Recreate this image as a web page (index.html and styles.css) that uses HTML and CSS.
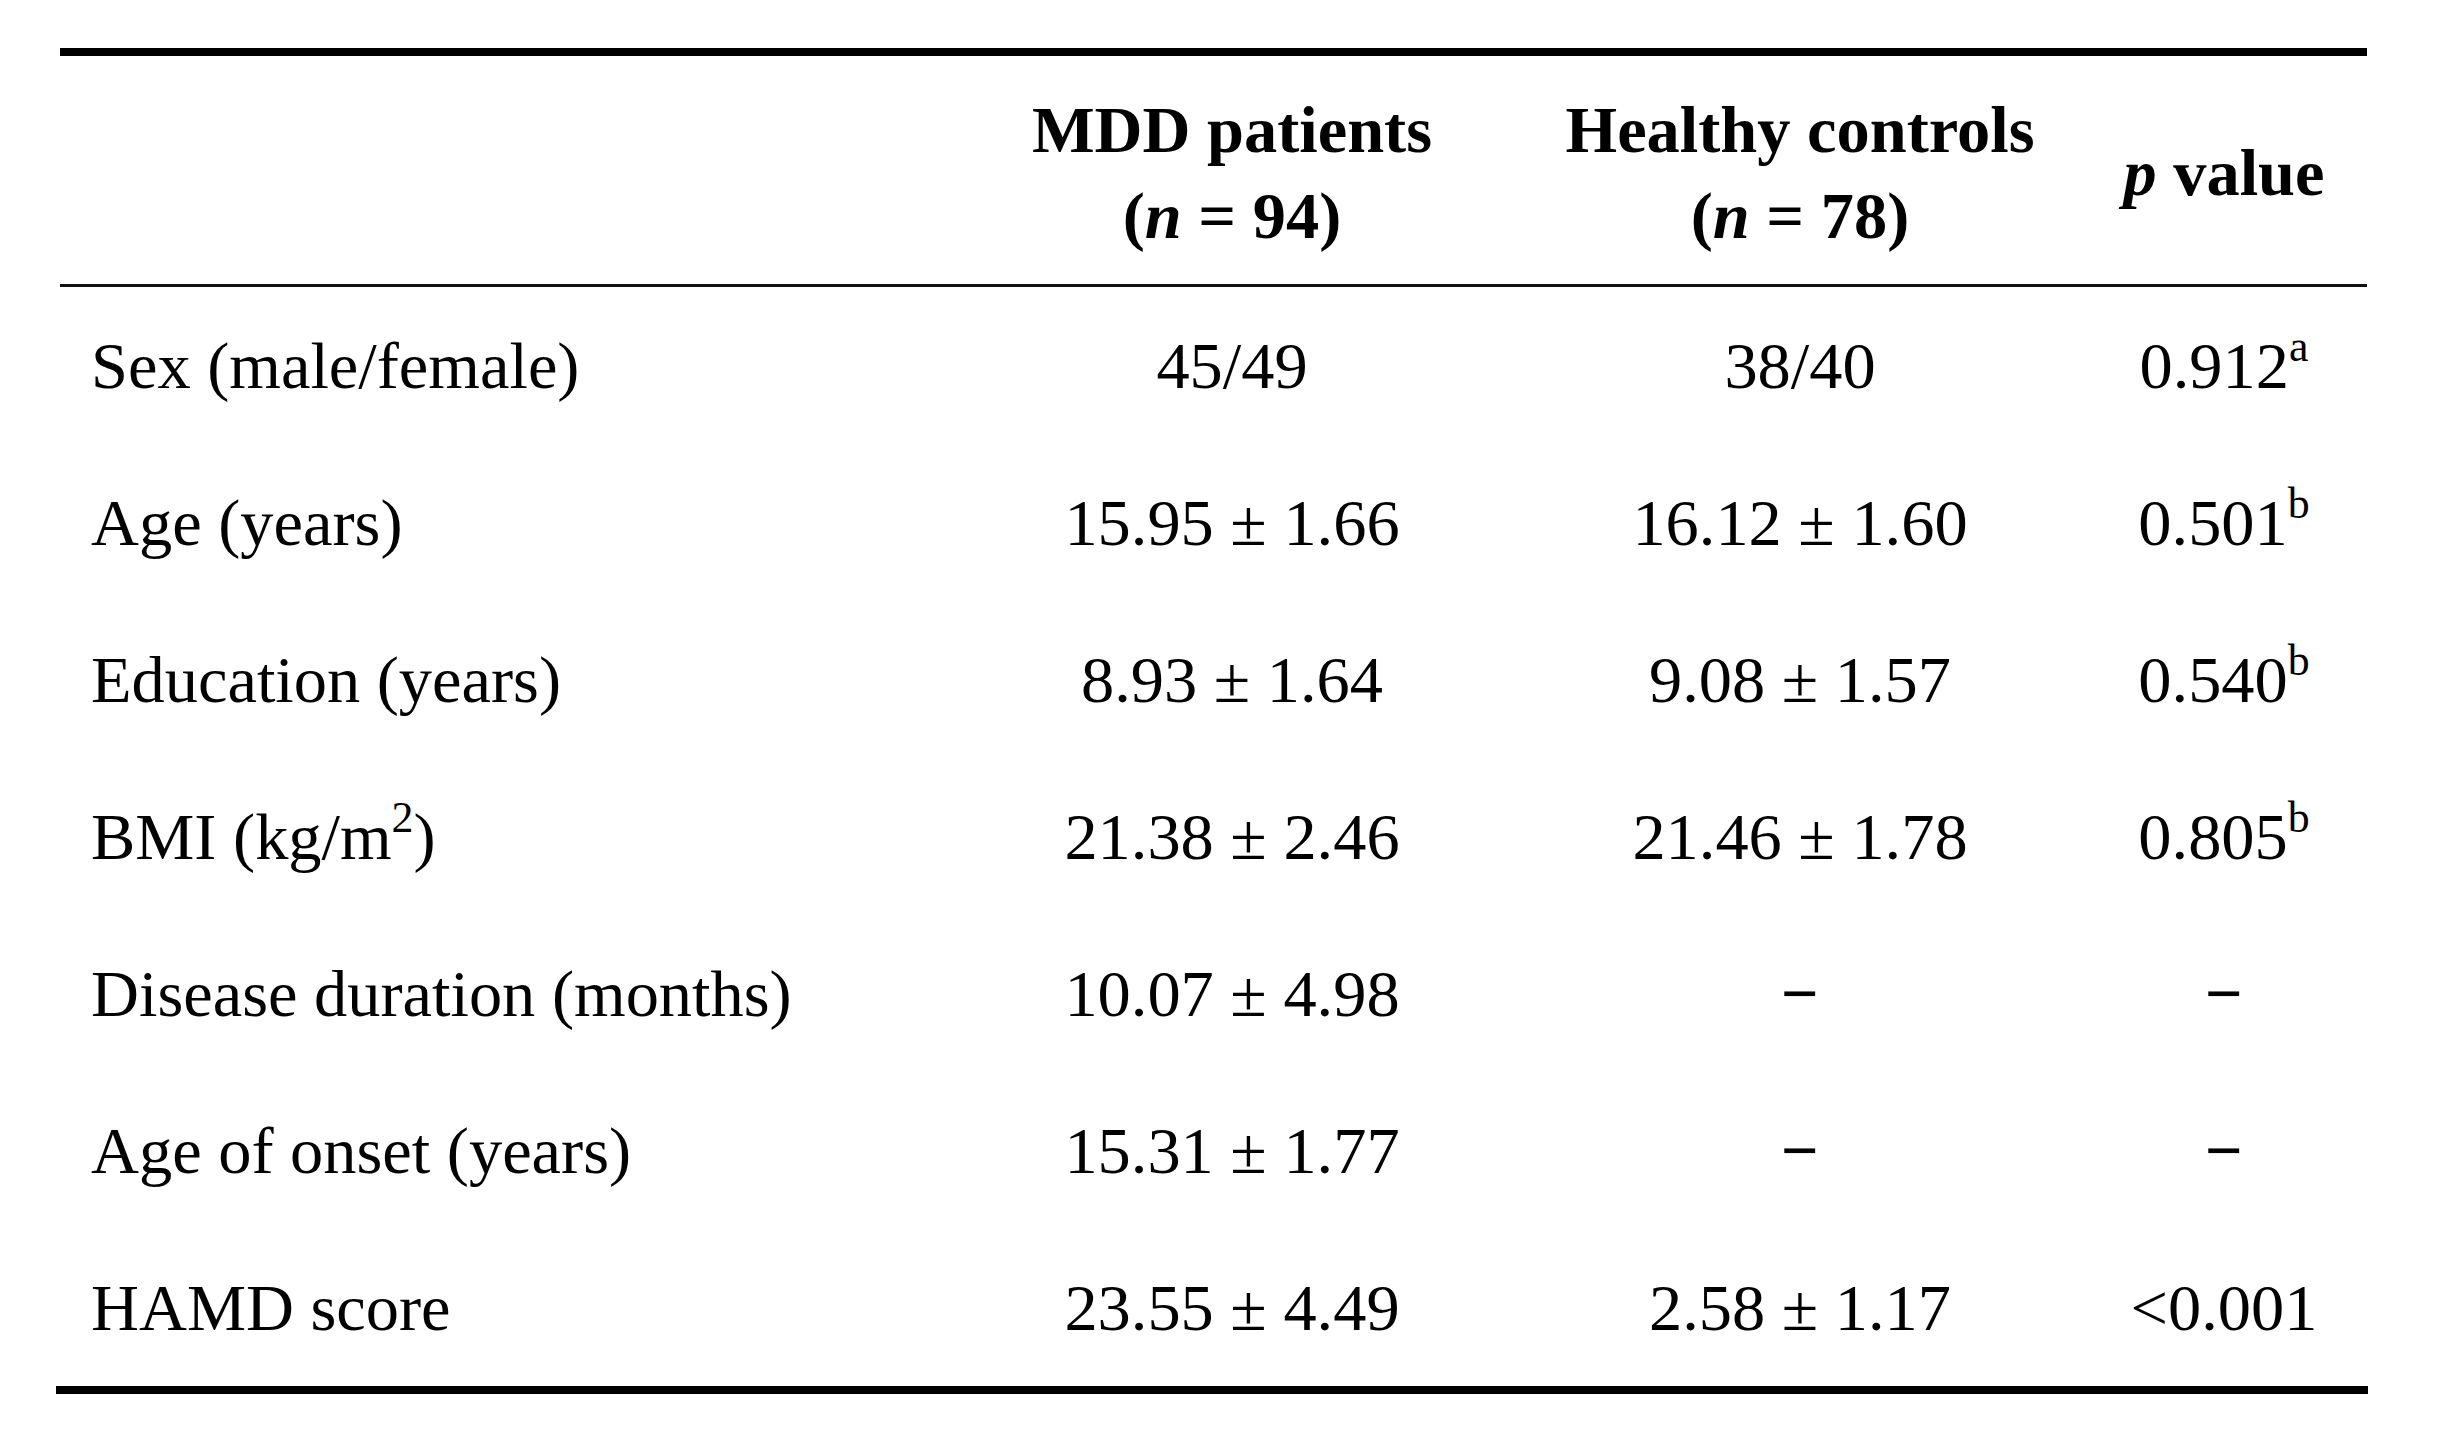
FILE: index.html
```html
<!DOCTYPE html>
<html lang="en">
<head>
<meta charset="utf-8">
<title>Demographic and clinical characteristics</title>
<link rel="stylesheet" href="styles.css">
</head>
<body>
<div class="page">
  <table class="stats">
    <colgroup>
      <col class="c-label">
      <col class="c-mdd">
      <col class="c-hc">
      <col class="c-p">
    </colgroup>
    <thead>
      <tr>
        <th class="label"></th>
        <th>MDD patients<br>(<i>n</i> = 94)</th>
        <th>Healthy controls<br>(<i>n</i> = 78)</th>
        <th><i>p</i> value</th>
      </tr>
    </thead>
    <tbody>
      <tr>
        <td class="label">Sex (male/female)</td>
        <td>45/49</td>
        <td>38/40</td>
        <td>0.912<sup>a</sup></td>
      </tr>
      <tr>
        <td class="label">Age (years)</td>
        <td>15.95 ± 1.66</td>
        <td>16.12 ± 1.60</td>
        <td>0.501<sup>b</sup></td>
      </tr>
      <tr>
        <td class="label">Education (years)</td>
        <td>8.93 ± 1.64</td>
        <td>9.08 ± 1.57</td>
        <td>0.540<sup>b</sup></td>
      </tr>
      <tr>
        <td class="label">BMI (kg/m<sup>2</sup>)</td>
        <td>21.38 ± 2.46</td>
        <td>21.46 ± 1.78</td>
        <td>0.805<sup>b</sup></td>
      </tr>
      <tr>
        <td class="label">Disease duration (months)</td>
        <td>10.07 ± 4.98</td>
        <td><span class="na">−</span></td>
        <td><span class="na">−</span></td>
      </tr>
      <tr>
        <td class="label">Age of onset (years)</td>
        <td>15.31 ± 1.77</td>
        <td><span class="na">−</span></td>
        <td><span class="na">−</span></td>
      </tr>
      <tr>
        <td class="label">HAMD score</td>
        <td>23.55 ± 4.49</td>
        <td>2.58 ± 1.17</td>
        <td>&lt;0.001</td>
      </tr>
    </tbody>
  </table>
  <div class="bottom-rule"></div>
</div>
</body>
</html>
```

FILE: styles.css
```css
html, body {
  margin: 0;
  padding: 0;
  background: #ffffff;
}

.page {
  padding-top: 48px;
  font-family: "Liberation Serif", "Times New Roman", serif;
  color: #000000;
}

.stats {
  margin-left: 60px;
  width: 2307px;
  border-collapse: collapse;
  table-layout: fixed;
  font-size: 66.4px;
  border-top: 8px solid #000000;
}

.c-label { width: 885px; }
.c-mdd { width: 574px; }
.c-hc { width: 562px; }
.c-p { width: 286px; }

.stats thead th {
  font-weight: bold;
  line-height: 86px;
  padding: 31px 0 25px 0;
  text-align: center;
  vertical-align: middle;
  border-bottom: 3px solid #111111;
}

.stats tbody td {
  height: 157px;
  line-height: 157px;
  padding: 0;
  text-align: center;
  vertical-align: top;
  white-space: nowrap;
}

.stats .label {
  text-align: left;
  padding-left: 31px;
}

.stats sup {
  font-size: 0.66em;
  line-height: 0;
  vertical-align: 27px;
}

.stats .na {
  font-weight: bold;
}

.bottom-rule {
  margin-left: 56px;
  width: 2312px;
  height: 8px;
  background: #000000;
}
```
